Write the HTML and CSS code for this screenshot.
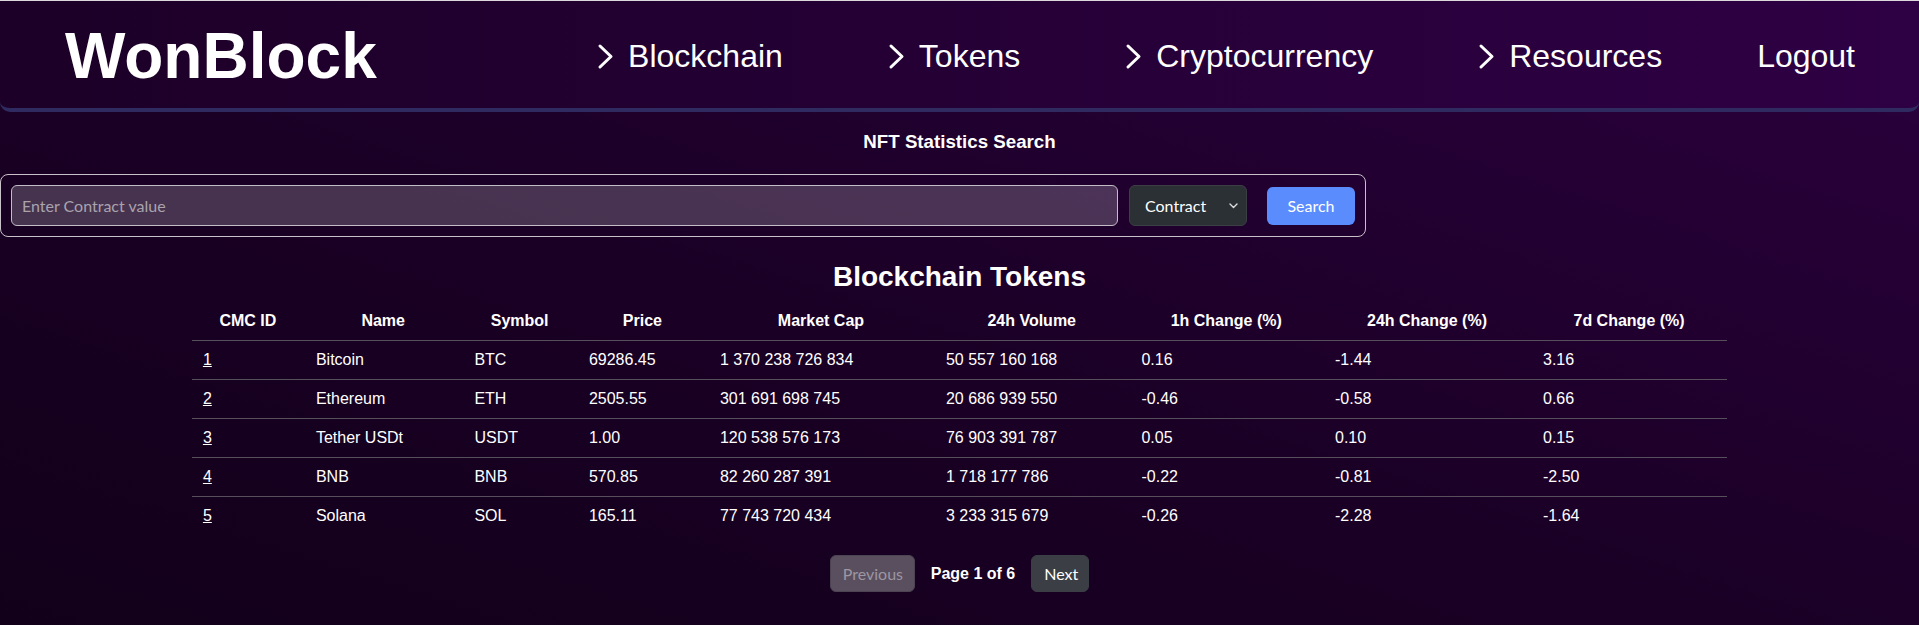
FILE: index.html
```html
<!DOCTYPE html>
<html lang="en">
<head>
<meta charset="utf-8">
<title>WonBlock</title>
<link rel="stylesheet" href="styles.css">
</head>
<body class="page">
<header class="topbar">
  <div class="brand">WonBlock</div>
  <nav class="nav">
    <a class="nav-item" href="#"><svg class="chev" width="17" height="27" viewBox="0 0 17 27"><polyline points="3,3 14,13.5 3,24" fill="none" stroke="#fff" stroke-width="3" stroke-linecap="round" stroke-linejoin="round"/></svg><span>Blockchain</span></a>
    <a class="nav-item" href="#"><svg class="chev" width="17" height="27" viewBox="0 0 17 27"><polyline points="3,3 14,13.5 3,24" fill="none" stroke="#fff" stroke-width="3" stroke-linecap="round" stroke-linejoin="round"/></svg><span>Tokens</span></a>
    <a class="nav-item" href="#"><svg class="chev" width="17" height="27" viewBox="0 0 17 27"><polyline points="3,3 14,13.5 3,24" fill="none" stroke="#fff" stroke-width="3" stroke-linecap="round" stroke-linejoin="round"/></svg><span>Cryptocurrency</span></a>
    <a class="nav-item" href="#"><svg class="chev" width="17" height="27" viewBox="0 0 17 27"><polyline points="3,3 14,13.5 3,24" fill="none" stroke="#fff" stroke-width="3" stroke-linecap="round" stroke-linejoin="round"/></svg><span>Resources</span></a>
    <a class="nav-item logout" href="#">Logout</a>
  </nav>
</header>

<main class="content">
  <h3 class="search-title">NFT Statistics Search</h3>
  <form class="search-box">
    <input class="search-input" type="text" placeholder="Enter Contract value">
    <div class="select-wrap">
      <select class="search-select">
        <option>Contract</option>
      </select>
      <svg class="select-caret" width="9" height="6" viewBox="0 0 9 6"><polyline points="1,1 4.5,4.5 8,1" fill="none" stroke="#ddd" stroke-width="1.4" stroke-linecap="round" stroke-linejoin="round"/></svg>
    </div>
    <button class="search-btn" type="button">Search</button>
  </form>

  <h2 class="table-title">Blockchain Tokens</h2>
  <table class="tokens">
    <colgroup>
      <col class="c-id"><col class="c-name"><col class="c-sym"><col class="c-price"><col class="c-cap"><col class="c-vol"><col class="c-1h"><col class="c-24h"><col class="c-7d">
    </colgroup>
    <thead>
      <tr><th>CMC ID</th><th>Name</th><th>Symbol</th><th>Price</th><th>Market Cap</th><th>24h Volume</th><th>1h Change (%)</th><th>24h Change (%)</th><th>7d Change (%)</th></tr>
    </thead>
    <tbody>
      <tr><td><a href="#">1</a></td><td>Bitcoin</td><td>BTC</td><td>69286.45</td><td>1 370 238 726 834</td><td>50 557 160 168</td><td>0.16</td><td>-1.44</td><td>3.16</td></tr>
      <tr><td><a href="#">2</a></td><td>Ethereum</td><td>ETH</td><td>2505.55</td><td>301 691 698 745</td><td>20 686 939 550</td><td>-0.46</td><td>-0.58</td><td>0.66</td></tr>
      <tr><td><a href="#">3</a></td><td>Tether USDt</td><td>USDT</td><td>1.00</td><td>120 538 576 173</td><td>76 903 391 787</td><td>0.05</td><td>0.10</td><td>0.15</td></tr>
      <tr><td><a href="#">4</a></td><td>BNB</td><td>BNB</td><td>570.85</td><td>82 260 287 391</td><td>1 718 177 786</td><td>-0.22</td><td>-0.81</td><td>-2.50</td></tr>
      <tr><td><a href="#">5</a></td><td>Solana</td><td>SOL</td><td>165.11</td><td>77 743 720 434</td><td>3 233 315 679</td><td>-0.26</td><td>-2.28</td><td>-1.64</td></tr>
    </tbody>
  </table>

  <div class="pager">
    <button class="pg-btn pg-prev" type="button" disabled>Previous</button>
    <span class="pg-label">Page 1 of 6</span>
    <button class="pg-btn pg-next" type="button">Next</button>
  </div>
</main>
</body>
</html>
```
FILE: styles.css
```css
html, body { margin: 0; padding: 0; }
.page {
  min-height: 625px;
  border-top: 1px solid #dcd8dc;
  box-sizing: border-box;
  font-family: "Liberation Sans", Arial, sans-serif;
  color: #fff;
  background: linear-gradient(to top right, #12001a 0%, #1a0025 45%, #2b003e 100%);
}
.topbar {
  height: 107px;
  display: flex;
  align-items: center;
  justify-content: space-between;
  padding: 0 64px 0 65px;
  background: linear-gradient(to right, #1c0027, #2e0044);
  border-bottom: 4px solid #2f2b60;
  border-radius: 0 0 10px 10px;
}
.brand {
  font-size: 64px;
  font-weight: 700;
  line-height: 1;
  margin-top: 3px;
}
.nav {
  display: flex;
  align-items: center;
  gap: 105px;
  margin-top: 2px;
}
.nav-item {
  display: flex;
  align-items: center;
  gap: 14px;
  color: #fff;
  text-decoration: none;
  font-size: 32px;
  line-height: 1;
}
.chev { display: block; margin-top: 2px; }
.logout { margin-left: -10px; }

.content { display: flex; flex-direction: column; align-items: center; }
.search-title {
  font-size: 18.72px;
  font-weight: 700;
  line-height: 22px;
  margin: 19px 0 21px;
}
.search-box {
  align-self: flex-start;
  width: 1366px;
  box-sizing: border-box;
  display: flex;
  align-items: center;
  padding: 10px 10px 10px 10px;
  border: 1px solid #c9c1c9;
  border-radius: 8px;
  margin: 0;
}
.search-input {
  flex: 1;
  height: 41px;
  box-sizing: border-box;
  background: rgba(255,255,255,0.2);
  border: 1px solid #c4bcc6;
  border-radius: 6px;
  padding: 0 10px;
  font-family: Lato, "Open Sans", sans-serif;
  font-size: 16px;
  color: #fff;
}
.search-input::placeholder { color: #aaa3ad; }
.select-wrap { position: relative; margin-left: 11px; }
.search-select {
  appearance: none;
  -webkit-appearance: none;
  width: 118px;
  height: 41px;
  box-sizing: border-box;
  background: #2b3035;
  border: 1px solid #3c3f44;
  border-radius: 6px;
  color: #fff;
  padding: 0 20px 0 15px;
  font-family: Lato, "Open Sans", sans-serif;
  font-size: 16px;
}
.select-caret { position: absolute; right: 9px; top: 18px; }
.search-btn {
  margin-left: 20px;
  width: 88px;
  height: 38px;
  background: #5b8cfd;
  border: none;
  border-radius: 6px;
  color: #fff;
  font-family: Lato, "Open Sans", sans-serif;
  font-size: 16px;
}
.table-title {
  font-size: 28px;
  font-weight: 700;
  line-height: 34px;
  margin: 23px 0 7px;
}
.tokens {
  width: 80%;
  table-layout: fixed;
  border-collapse: collapse;
  font-size: 16px;
}
.c-id { width: 112px; }
.c-name { width: 158.5px; }
.c-sym { width: 114.5px; }
.c-price { width: 131px; }
.c-cap { width: 226px; }
.c-vol { width: 195.5px; }
.c-1h { width: 193.5px; }
.c-24h { width: 208px; }
.c-7d { width: 196px; }
.tokens th {
  font-weight: 700;
  text-align: center;
  padding: 10px 12px;
  line-height: 19px;
  border-bottom: 1px solid #57505c;
}
.tokens td {
  text-align: left;
  padding: 10px 12px 10px;
  line-height: 18px;
}
.tokens td:first-child { padding-left: 11px; }
.tokens tbody tr + tr td { border-top: 1px solid #57505c; }
.tokens a { color: #fff; text-decoration: underline; }
.pager {
  display: flex;
  align-items: center;
  gap: 16px;
  margin-top: 20px;
}
.pg-btn {
  height: 37px;
  padding: 0 12px;
  border-radius: 6px;
  font-family: Lato, "Open Sans", sans-serif;
  font-size: 16px;
}
.pg-prev {
  width: 85px;
  background: #5a4f5e;
  border: 1px solid #4d4453;
  color: #9d96a3;
}
.pg-next {
  width: 58px;
  background: #3b3f45;
  border: 1px solid #3b3f45;
  color: #fff;
}
.pg-label { font-weight: 700; font-size: 16px; }
```
